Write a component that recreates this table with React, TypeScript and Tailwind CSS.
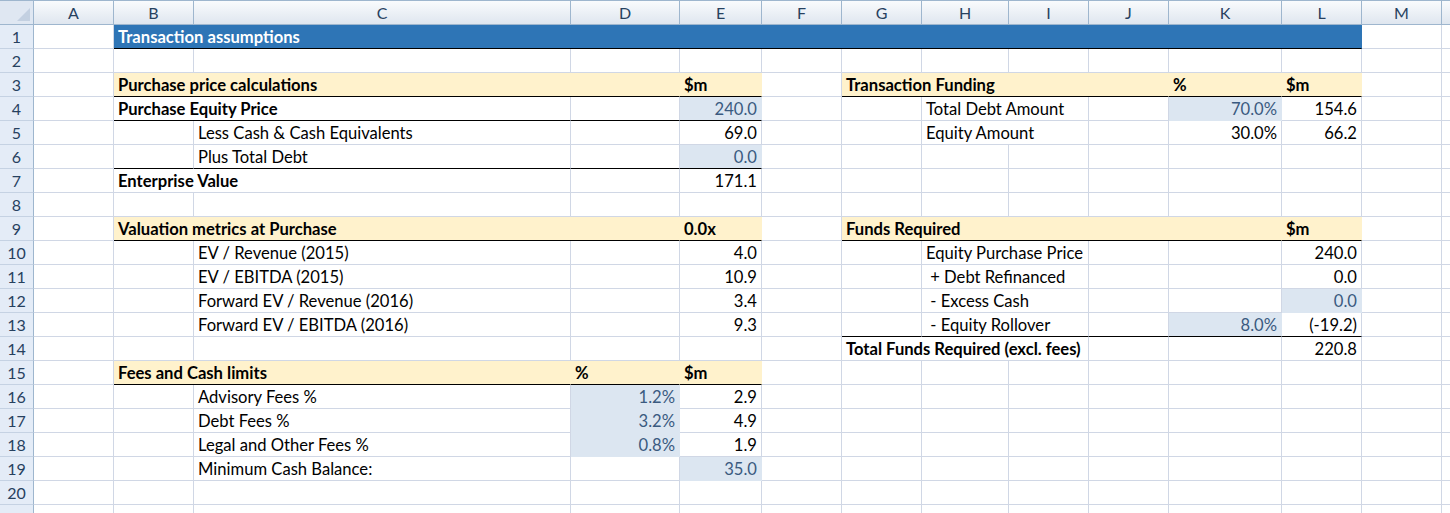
import React from 'react';

// Excel-style sheet: "Transaction assumptions"

type Cell = {
  c: number;
  span?: number;
  text?: string;
  bold?: boolean;
  right?: boolean;
  fill?: 'title' | 'head' | 'input';
  edge?: boolean;
};

const COLS = ['A', 'B', 'C', 'D', 'E', 'F', 'G', 'H', 'I', 'J', 'K', 'L', 'M', ''];

const rows: Cell[][] = [
  [{ c: 1, span: 11, text: 'Transaction assumptions', bold: true, fill: 'title', edge: true }],
  [],
  [
    { c: 1, span: 3, text: 'Purchase price calculations', bold: true, fill: 'head', edge: true },
    { c: 4, text: '$m', bold: true, fill: 'head', edge: true },
    { c: 6, span: 4, text: 'Transaction Funding', bold: true, fill: 'head', edge: true },
    { c: 10, text: '%', bold: true, fill: 'head', edge: true },
    { c: 11, text: '$m', bold: true, fill: 'head', edge: true },
  ],
  [
    { c: 1, span: 2, text: 'Purchase Equity Price', bold: true, edge: true },
    { c: 3, edge: true },
    { c: 4, text: '240.0', right: true, fill: 'input', edge: true },
    { c: 7, span: 2, text: 'Total Debt Amount' },
    { c: 10, text: '70.0%', right: true, fill: 'input' },
    { c: 11, text: '154.6', right: true },
  ],
  [
    { c: 2, text: 'Less Cash & Cash Equivalents' },
    { c: 4, text: '69.0', right: true },
    { c: 7, span: 2, text: 'Equity Amount' },
    { c: 10, text: '30.0%', right: true },
    { c: 11, text: '66.2', right: true },
  ],
  [
    { c: 1, edge: true },
    { c: 2, text: 'Plus Total Debt', edge: true },
    { c: 3, edge: true },
    { c: 4, text: '0.0', right: true, fill: 'input', edge: true },
  ],
  [
    { c: 1, span: 2, text: 'Enterprise Value', bold: true },
    { c: 4, text: '171.1', right: true },
  ],
  [],
  [
    { c: 1, span: 3, text: 'Valuation metrics at Purchase', bold: true, fill: 'head', edge: true },
    { c: 4, text: '0.0x', bold: true, fill: 'head', edge: true },
    { c: 6, span: 5, text: 'Funds Required', bold: true, fill: 'head', edge: true },
    { c: 11, text: '$m', bold: true, fill: 'head', edge: true },
  ],
  [
    { c: 2, text: 'EV / Revenue (2015)' },
    { c: 4, text: '4.0', right: true },
    { c: 7, span: 2, text: 'Equity Purchase Price' },
    { c: 11, text: '240.0', right: true },
  ],
  [
    { c: 2, text: 'EV / EBITDA (2015)' },
    { c: 4, text: '10.9', right: true },
    { c: 7, span: 2, text: ' + Debt Refinanced' },
    { c: 11, text: '0.0', right: true },
  ],
  [
    { c: 2, text: 'Forward EV / Revenue (2016)' },
    { c: 4, text: '3.4', right: true },
    { c: 7, span: 2, text: ' - Excess Cash' },
    { c: 11, text: '0.0', right: true, fill: 'input' },
  ],
  [
    { c: 2, text: 'Forward EV / EBITDA (2016)' },
    { c: 4, text: '9.3', right: true },
    { c: 6, edge: true },
    { c: 7, span: 2, text: ' - Equity Rollover', edge: true },
    { c: 9, edge: true },
    { c: 10, text: '8.0%', right: true, fill: 'input', edge: true },
    { c: 11, text: '(-19.2)', right: true, edge: true },
  ],
  [
    { c: 6, span: 3, text: 'Total Funds Required (excl. fees)', bold: true },
    { c: 11, text: '220.8', right: true },
  ],
  [
    { c: 1, span: 2, text: 'Fees and Cash limits', bold: true, fill: 'head', edge: true },
    { c: 3, text: '%', bold: true, fill: 'head', edge: true },
    { c: 4, text: '$m', bold: true, fill: 'head', edge: true },
  ],
  [
    { c: 2, text: 'Advisory Fees %' },
    { c: 3, text: '1.2%', right: true, fill: 'input' },
    { c: 4, text: '2.9', right: true },
  ],
  [
    { c: 2, text: 'Debt Fees %' },
    { c: 3, text: '3.2%', right: true, fill: 'input' },
    { c: 4, text: '4.9', right: true },
  ],
  [
    { c: 2, text: 'Legal and Other Fees %' },
    { c: 3, text: '0.8%', right: true, fill: 'input' },
    { c: 4, text: '1.9', right: true },
  ],
  [
    { c: 2, text: 'Minimum Cash Balance:' },
    { c: 4, text: '35.0', right: true, fill: 'input' },
  ],
  [],
  [],
];

const spanClass: Record<number, string> = {
  1: 'col-span-1',
  2: 'col-span-2',
  3: 'col-span-3',
  4: 'col-span-4',
  5: 'col-span-5',
  11: 'col-span-11',
};

function cellClass(cell: Cell | undefined) {
  const base = 'flex items-center pt-[1px] px-[4px] overflow-hidden whitespace-pre border-r border-b leading-[20px]';
  if (!cell) return `${base} border-r-[#d0d7e5] border-b-[#d0d7e5]`;
  const parts = [base, spanClass[cell.span ?? 1], cell.right ? 'justify-end' : 'justify-start', cell.bold ? 'font-bold' : ''];
  if (cell.fill === 'title') parts.push('bg-[#2e75b6] text-white border-r-[#2e75b6]');
  else if (cell.fill === 'head') parts.push('bg-[#fff2cc] border-r-[#fff2cc]');
  else if (cell.fill === 'input') parts.push('bg-[#dce6f1] text-[#3a5a80] border-r-[#dce6f1]');
  else parts.push('border-r-[#d0d7e5]');
  if (cell.edge) parts.push('border-b-black');
  else if (cell.fill === 'input') parts.push('border-b-[#dce6f1]');
  else if (cell.fill === 'head') parts.push('border-b-[#fff2cc]');
  else parts.push('border-b-[#d0d7e5]');
  return parts.join(' ');
}

function SheetRow({ n, cells }: { n: number; cells: Cell[] }) {
  const out: React.ReactNode[] = [];
  let c = 0;
  while (c < COLS.length) {
    const cell = cells.find((x) => x.c === c);
    out.push(
      <div key={c} className={cellClass(cell)}>
        {cell?.text}
      </div>
    );
    c += cell?.span ?? 1;
  }
  return (
    <>
      <div className="flex items-center justify-center bg-[#e4ecf7] border-r border-b border-r-[#9eb6ce] border-b-[#c5d2e3] text-[16px] text-[#27415f]">
        {n <= 20 ? n : ''}
      </div>
      {out}
    </>
  );
}

export default function App() {
  return (
    <div className="h-[513px] w-[1450px] overflow-hidden bg-white text-[16.6px] text-black" style={{ fontFamily: 'Lato, "Liberation Sans", sans-serif' }}>
      <div className="grid grid-cols-[34px_80px_80px_377px_109px_82px_80px_80px_87px_80px_80px_113px_80px_80px_1fr] grid-rows-[25px] auto-rows-[24px]">
        <div className="relative bg-[#dfe7f2] border-t border-r border-b border-[#9eb6ce]">
          <svg className="absolute right-[3px] bottom-[3px]" width="13" height="13" viewBox="0 0 13 13">
            <polygon points="13,0 13,13 0,13" fill="#c3d0e1" />
          </svg>
        </div>
        {COLS.map((l, i) => (
          <div
            key={i}
            className="flex items-center justify-center bg-linear-to-b from-[#f9fbfd] to-[#dfe6ef] border-t border-r border-b border-[#9eb6ce] text-[16px] text-[#27415f]"
          >
            {l}
          </div>
        ))}
        {rows.map((cells, i) => (
          <SheetRow key={i} n={i + 1} cells={cells} />
        ))}
      </div>
    </div>
  );
}
